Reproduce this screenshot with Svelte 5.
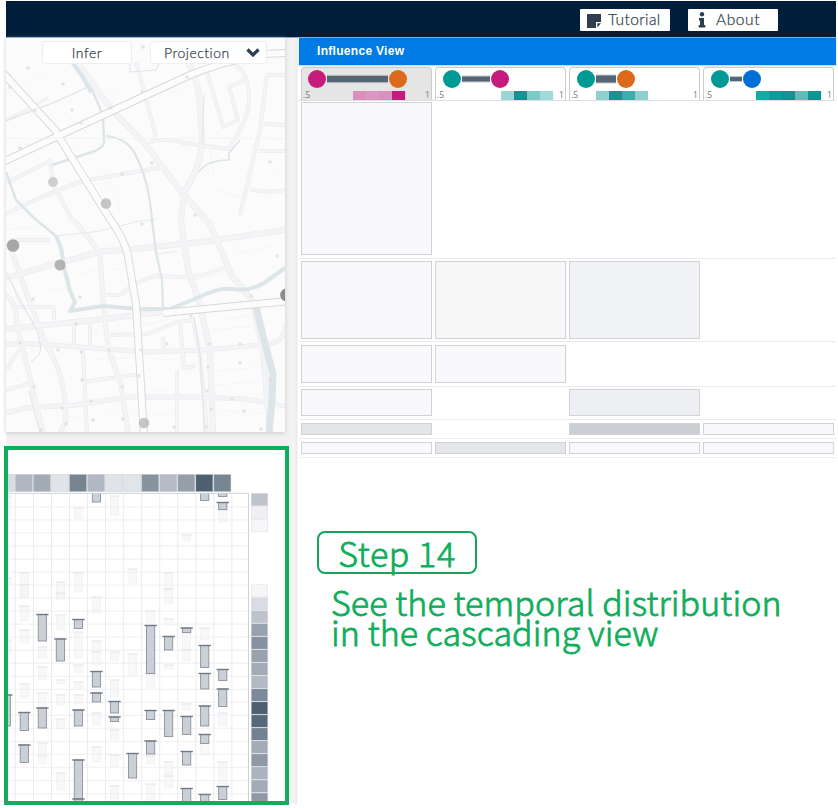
<script>
  const canals = [
    ['M72 62L82 76L91 92', 4], ['M88 84Q99 101 103 119L104 140Q105 148 92 152L52 165', 2.4],
    ['M6 121L55 102L88 87', 1.3], ['M106 136Q129 138 137 158Q149 182 152 220L156 252L162 280L163 309', 2.2],
    ['M6 172L16 200L34 218L56 236', 2.6], ['M56 236Q63 250 63 263L70 291L75 302L70 311L103 306L138 309L170 309L197 298Q219 287 232 289Q249 292 264 283L285 268', 4],
    ['M256 306L264 340L273 374L272 400L269 433', 7], ['M240 140L229 153L229 160Q207 160 199 172', 1.7],
    ['M6 272L23 305L37 331Q43 348 39 355L31 362', 1], ['M194 317L200 355L203 400L204 432', 1],
    ['M57 236L100 231L135 222L156 219', .8], ['M12 283L18 300L34 323', .8], ['M158 254L178 251', .7],
    ['M204 95L202 145', 1], ['M130 63L130 72L156 70L160 62', 1], ['M29 390L35 415L40 432', 1]
  ];
  const streets = [
    ['M77 62L112 110L147 146L180 190L205 219', 6], ['M188 62Q200 83 200 110L202 140Q202 158 192 178L184 193L181 220L188 270L199 301L210 350L213 432', 6],
    ['M150 142Q165 137 184 143L228 149Q254 113 248 88Q246 70 232 62', 4], ['M207 72L223 127L238 120L229 87L246 79', 4],
    ['M267 75L285 75M267 75L260 130L240 215M264 124L285 125M259 151L285 151M250 189Q269 194 285 190', 4],
    ['M136 62L144 91L156 137', 4],
    ['M6 214Q47 193 83 181L163 167M6 183L52 160', 4], ['M50 160L53 184L72 220', 4],
    ['M6 278L55 264L103 251L125 250L201 242L285 230', 6], ['M74 220L100 252L103 300L108 348L121 385L128 432', 5],
    ['M6 329L85 321L163 312', 6], ['M6 345L20 343L80 347L145 352L205 350L270 344Q285 341 285 325', 5],
    ['M12 252L28 297L46 345Q66 374 66 420L60 432', 5], ['M6 295Q17 303 17 325L31 382L43 432', 5],
    ['M6 413L25 408L75 405L130 397L200 397L245 399L285 406', 5], ['M10 240L50 240M8 370L12 359L24 345', 4],
    ['M208 220L232 276L252 300L263 350L267 400L270 432', 6],
    ['M102 295L120 295Q146 274 164 276Q198 280 226 267', 4], ['M74 322V346M90 322V348M83 350L87 432M83 382L140 374M6 390L28 384', 4],
    ['M110 335L148 334L177 322L193 320L200 355L207 432', 4], ['M180 322L184 368L196 366M177 370V432M163 337L164 350', 4],
    ['M17 307L54 307L54 320', 4], ['M6 120L28 109L48 98', 3], ['M181 190L207 222', 5]
  ];
  const minor = 'M6 94L45 75M20 142L43 150M62 110L92 138M105 170L120 210M115 90L105 124M161 88L184 94M210 150L214 176M218 190L250 201M6 230L48 225M80 275L96 270M113 270L130 268M15 360L35 350M91 360L138 357M220 320L254 315M215 371L262 367M215 385L260 382M220 410L264 414M145 390H172M146 415H174M106 410H138M55 415L80 418M90 335L104 334M195 280L225 274M233 255L275 245M210 330L255 326M50 290L67 287M140 325L172 319M270 139L283 140M270 170L282 170M6 199L27 190M151 358L172 360';
  const dots = [[10,87],[35,110],[28,68],[63,84],[72,110],[81,123],[142,92],[187,77],[111,108],[20,148],[122,174],[152,163],[143,47],[270,162],[195,215],[142,224],[277,256],[33,299],[80,297],[76,324],[20,343],[58,350],[81,352],[109,350],[141,350],[209,344],[240,344],[167,344],[240,363],[82,380],[139,376],[122,387],[34,387],[91,401],[62,408],[208,367],[207,391],[211,409],[232,399],[244,411],[66,424],[93,420],[123,419],[261,429],[41,430],[174,427],[206,427],[270,380],[191,316],[251,296]];
  const tops = ['#d9dce1','#b0b6c2','#a2aab5','#e0e3e7','#758490','#b2b7c4','#e1e3e8','#e1e4e8','#87939f','#b5bac6','#949fa9','#4d6070','#788692'];
  const sides = ['#bfc3cc','#efeff4','#f6f6f9',null,null,null,null,'#f6f6f9','#dadce4','#bfc3cd','#98a2ae','#8792a0','#98a3ae','#a2abb6','#b3bac4','#7b8998','#4d5f70','#566879','#738190','#a3abb6','#8e99a5','#abb3bf','#a2abb6','#8f99a5'];
  const dark = [[-1,695,726],[0,712.5,730.5],[0,745,762.5],[1,614.5,641],[1,708,728],[2,639,661],[3,619.5,628.5],[3,710,726],[3,760,799],[3,799,803],[4,485,502],[4,671.5,687],[4,693,702],[5,701.5,713],[5,717,721.5],[6,753.5,778],[7,625.5,673.5],[7,710.5,719.5],[7,741,754],[8,636.5,650],[8,710.5,736.5],[9,628,632.5],[9,716.5,734.5],[9,751.5,765],[9,788.5,803],[10,485,500.5],[10,645.5,667.5],[10,673.5,689],[10,706,726],[10,734.5,743.5],[10,794.5,803],[11,485,496.5],[11,502.500,509.5],[11,669.5,680.5],[11,689,706.5],[11,786.5,799.5]];
  const faint = [[-1,496,516],[-1,578,585],[-1,640,654],[0,573,597],[0,584.5,597],[0,606,621],[0,630,643],[0,684,698],[1,647,658],[1,667,680],[1,693,708],[1,743,754],[1,756,764],[2,582,599],[2,593,599],[2,615,630],[2,680,684],[2,695,705],[2,719,729],[2,773,790],[3,508,518],[3,573,592],[3,632,658],[3,665,673],[3,682,688],[3,695,704],[4,597,613],[4,641,652],[4,652,665],[4,713,725],[4,747,762],[5,496,515],[5,652,661],[5,680,697],[5,730,739],[5,755,766],[5,786,801],[6,569,583],[6,654,675],[7,611,622],[7,674,688],[7,756,764],[7,784,800],[8,573,590],[8,589,604],[8,619,625],[8,665,669],[8,762,775],[8,776,788],[9,535,541],[9,632,650],[9,650,661],[9,704,710],[10,628,640],[10,743,755],[11,510,522],[11,713,726],[11,762,784]];
  const cx = (i) => 24.3 + 18.04 * i;
  const cards = [
    { a: 16, b: 97, ca: '#c71a7d', cb: '#db6a1c', h: 6.4, x: 52, heat: ['#da8fbd','#dc96c3','#da8fbd','#c71a7d'] },
    { a: 17, b: 65, ca: '#009a96', cb: '#c71a7d', h: 5, x: 66, heat: ['#9ad6d4','#079794','#7bcac9','#a0dad8'] },
    { a: 17, b: 57, ca: '#009a96', cb: '#db6a1c', h: 7, x: 27, heat: ['#8fcfce','#159592','#3daead','#90cfce'] },
    { a: 17, b: 49, ca: '#009a96', cb: '#006fd6', h: 4, x: 53, heat: ['#17a9a5','#0b9f9b','#0b9692','#5dbdb9','#0b9692'] }
  ];
  const rows = [
    { h: 158, top: 1, cell: 153, fills: ['#f9f9fc', null, null, null] },
    { h: 83, top: 2, cell: 78, fills: ['#f9f9fc', '#f7f7f8', '#f1f2f5', null] },
    { h: 45, top: 3, cell: 38, fills: ['#f9f9fc', '#f9f9fc', null, null] },
    { h: 33, top: 2, cell: 27, fills: ['#f9f9fc', null, '#eeeff2', null] },
    { h: 19, top: 3, cell: 12, fills: ['#e4e5e7', null, '#cbced3', '#f9f9fc'] },
    { h: 19, top: 3, cell: 12, fills: ['#f9f9fc', '#e5e6e8', '#f9f9fc', '#f9f9fc'] }
  ];
</script>

<div class="app">
  <header>
    <button class="tut"><svg width="15" height="15" viewBox="0 0 15 15"><path d="M0 1H14V9H9V15H0Z" fill="#2c3e50"/><path d="M10.300 10.300H14L10.300 14.500Z" fill="#2c3e50"/></svg><span>Tutorial</span></button>
    <button class="abt"><svg width="8" height="16" viewBox="0 0 8 16"><circle cx="4" cy="2.3" r="2.2" fill="#2c3e50"/><path d="M1 6H6V13H7.3V15.6H.7V13H2V8.4H1Z" fill="#2c3e50"/></svg><span>About</span></button>
  </header>
  <div class="body">
    <aside>
      <div class="map">
        <svg width="279" height="394" viewBox="6 38 279 394">
          <path d={minor} stroke="#f5f6f6" fill="none" />
          {#each streets as [d, w]}<path {d} stroke="#ebecef" stroke-width={w} fill="none" stroke-linejoin="round" />{/each}
          {#each streets as [d, w]}<path {d} stroke="#f4f4f7" stroke-width={w - 1.3} fill="none" stroke-linejoin="round" />{/each}
          {#each canals as [d, w]}<path {d} stroke="#dce5e8" stroke-width={w} fill="none" stroke-linejoin="round" />{/each}
          {#each [['#d8d8d8', 8], ['#fcfcfd', 6.2]] as [c, w]}
            <g stroke={c} stroke-width={w} fill="none">
              <path d="M266 90" />
              <path d="M289 90" />
              <path d="M285 91L285 91" />
              <path d="M285 53L266 54Q227 60 190 75L110 112L58 136L3 162" />
              <path d="M3 73L56 131L62 142L108 216Q125 240 128 256L136 304L139 353L144 436" />
              <path d="M163 313L215 308L289 301" />
            </g>
          {/each}
          <path d="M6 138.500H285" stroke="#f0f0f1" stroke-width=".7" />
          {#each dots as [x, y]}<circle cx={x} cy={y} r="1.8" fill="#ddd" opacity=".8" />{/each}
          <g fill="#bdbdbd" opacity=".85">
            <circle cx="53" cy="182" r="5" fill="#c9c9c9" /><circle cx="106" cy="203.500" r="5.300" />
            <circle cx="13" cy="245.500" r="6.300" fill="#999" /><circle cx="60" cy="265" r="5.500" fill="#aaa" />
            <circle cx="286.500" cy="295" r="6.300" fill="#777" /><circle cx="144" cy="423" r="5.300" />
          </g>
        </svg>
        <div class="tools">
          <button class="infer">Infer</button>
          <button class="proj">Projection<svg width="14" height="9" viewBox="0 0 14 9"><path d="M1.500 1.500L7 7L12.500 1.500" fill="none" stroke="#2c3e50" stroke-width="3.200" /></svg></button>
        </div>
      </div>
      <div class="cascade">
        <svg width="277" height="351" viewBox="8 450 277 351">
          {#each tops as c, i}<rect x={cx(i - 1) - 8.9} y="474.500" width="17" height="17" fill={c} stroke="#b9bfc6" stroke-opacity=".45" stroke-width=".8" />{/each}
          <svg x="8" y="493" width="241" height="309" viewBox="8 493 241 309">
            {#each Array(24) as _, i}<path d="M8 {506.9 + i * 13.03}H248" stroke="#f3f3f4" stroke-width="1.300" />{/each}
            {#each Array(13) as _, i}<path d="M{15.4 + i * 18.04} 493V802" stroke="#ebecee" stroke-width="1" />{/each}
            {#each faint as [i, a, b]}
              <rect x={cx(i) - 4} y={a} width="8" height={b - a} fill="#f1f2f5" fill-opacity=".5" stroke="#e8eaed" stroke-opacity=".5" stroke-width=".7" />
              <path d="M{cx(i) - 5.5} {a}h11" stroke="#e5e6e9" stroke-opacity=".9" />
            {/each}
            {#each dark as [i, a, b]}
              <rect x={cx(i) - 4.1} y={a} width="8.200" height={b - a} fill="#cbd0d6" stroke="#88919d" stroke-width=".9" />
              <path d="M{cx(i) - 6.2} {a}h12.400" stroke="#707a86" stroke-width="1.400" />
            {/each}
          </svg>
          <path d="M8 493.300H248.500V802" fill="none" stroke="#ced1d6" />
          {#each sides as c, i}{#if c}<rect x="251.300" y={493.4 + i * 13.03} width="16.400" height="12.300" fill={c} stroke="#cfd4da" stroke-opacity=".5" stroke-width=".6" />{/if}{/each}
        </svg>
      </div>
    </aside>
    <main>
      <h1>Influence View</h1>
      <div class="cards">
        {#each cards as c, i}
          <div class="card" class:active={i === 0}>
            <svg width="129" height="33" viewBox="1 0 129 33">
              <rect x={c.a + 10} y={12 - c.h / 2 - 1} width={c.b - c.a - 20} height={c.h + 2} fill="#c3c8cc" />
              <rect x={c.a + 10} y={12 - c.h / 2} width={c.b - c.a - 20} height={c.h} fill="#566573" />
              <circle cx={c.a} cy="12" r="9" fill={c.ca} /><circle cx={c.b} cy="12" r="9" fill={c.cb} />
              {#each c.heat as f, k}<rect x={c.x + k * 13} y="24" width="13.100" height="9" fill={f} />{/each}
              <text x="2" y="31">.5</text><text x="124" y="31">1</text>
            </svg>
          </div>
        {/each}
      </div>
      {#each rows as r}
        <div class="row" style:height="{r.h}px" style:padding-top="{r.top}px">
          {#each r.fills as f}<div class="cell" class:filled={f} style:height="{r.cell}px" style:background={f}></div>{/each}
        </div>
      {/each}
      <div class="step"><span>Step 14</span></div>
      <p class="desc"><span class="l1">See the temporal distribution</span><br /><span class="l2">in the cascading view</span></p>
    </main>
  </div>
</div>

<style>
  :global(body) { background: #fff; overflow: hidden; }
  * { box-sizing: border-box; }
  .app { width: 838px; height: 808px; padding: 1px 2px 0 6px; background: #fff; overflow: hidden; font-family: Lato, sans-serif; color: #2c3e50; }
  svg { display: block; }
  header { height: 37px; background: #001e3a; display: flex; justify-content: flex-end; align-items: flex-start; padding: 8px 58px 0 0; gap: 18px; border-bottom: 1px solid #8da9c6; }
  button { font: 300 15.5px Lato, sans-serif; -webkit-text-stroke: .25px #34434f; color: #34434f; background: #fff; border: 0; padding: 0; display: flex; align-items: center; }
  header button { width: 90px; height: 22px; border-radius: 1px; }
  .tut { padding-left: 7px; gap: 6px; letter-spacing: .4px; }
  .abt { padding-left: 10px; gap: 10px; letter-spacing: .6px; }
  header span { margin-top: -3px; }
  .body { display: flex; height: 766px; }
  aside { width: 293px; background: linear-gradient(90deg, #f1f1f1 282px, #f5f4f5 288px, #eae9eb 291px, #fff 292px); }
  .map { height: 394px; width: 279px; background: #fbfbfc; display: grid; box-shadow: 0 1px 4px #ccc; }
  .map > * { grid-area: 1 / 1; }
  .tools { display: flex; gap: 18px; padding: 3px 0 0 36px; position: relative; }
  .tools button { height: 23px; border: 1px solid #eee; border-radius: 3px; font-size: 14px; letter-spacing: .5px; }
  .infer { width: 90px; justify-content: center; }
  .proj { width: 117px; padding-left: 13px; }
  .proj svg { margin-left: auto; margin-right: 6px; }
  .cascade { width: 285px; height: 359px; margin: 14px 0 0 -2px; border: 4px solid #0fae5b; background: #fff; position: relative; overflow: hidden; }
  main { width: 537px; background: #fff; }
  h1 { height: 27px; margin: 0; background: #007be6; color: #fff; font: bold 12px/26px "Liberation Sans", sans-serif; letter-spacing: .3px; padding-left: 18px; box-shadow: 0 1px 2px #a9cdf0; }
  .cards { height: 36px; padding: 2px 0 0 2px; display: flex; gap: 3px; border-bottom: 1px solid #dcdee0; }
  .card { width: 131px; height: 33px; border: 1px solid #ccc; border-bottom: 0; border-radius: 4px 4px 0 0; background: #fff; }
  .card svg { margin-top: -1px; }
  .active { background: #e5e5e5; }
  text { font: 8.5px "Open Sans", sans-serif; fill: #777; }
  .row { display: flex; gap: 3px; padding-left: 2px; border-bottom: 1px solid #ebebed; }
  .row + .row { padding-left: 2px; }
  .cell { width: 131px; }
  .filled { border: 1px solid #cfd2d6; }
  .step { width: 160px; height: 43px; border: 2px solid #18a35c; border-radius: 8px; margin: 73px 0 0 18px; color: #0fae5b; font: 300 34px/39px "Noto Sans CJK SC", sans-serif; letter-spacing: .6px; -webkit-text-stroke: .8px #0fae5b; text-align: center; white-space: nowrap; }
  .desc { margin: 13px 0 0 32px; color: #0fae5b; font: 300 34px/30px "Noto Sans CJK SC", sans-serif; letter-spacing: .1px; -webkit-text-stroke: .8px #0fae5b; white-space: nowrap; }
</style>
